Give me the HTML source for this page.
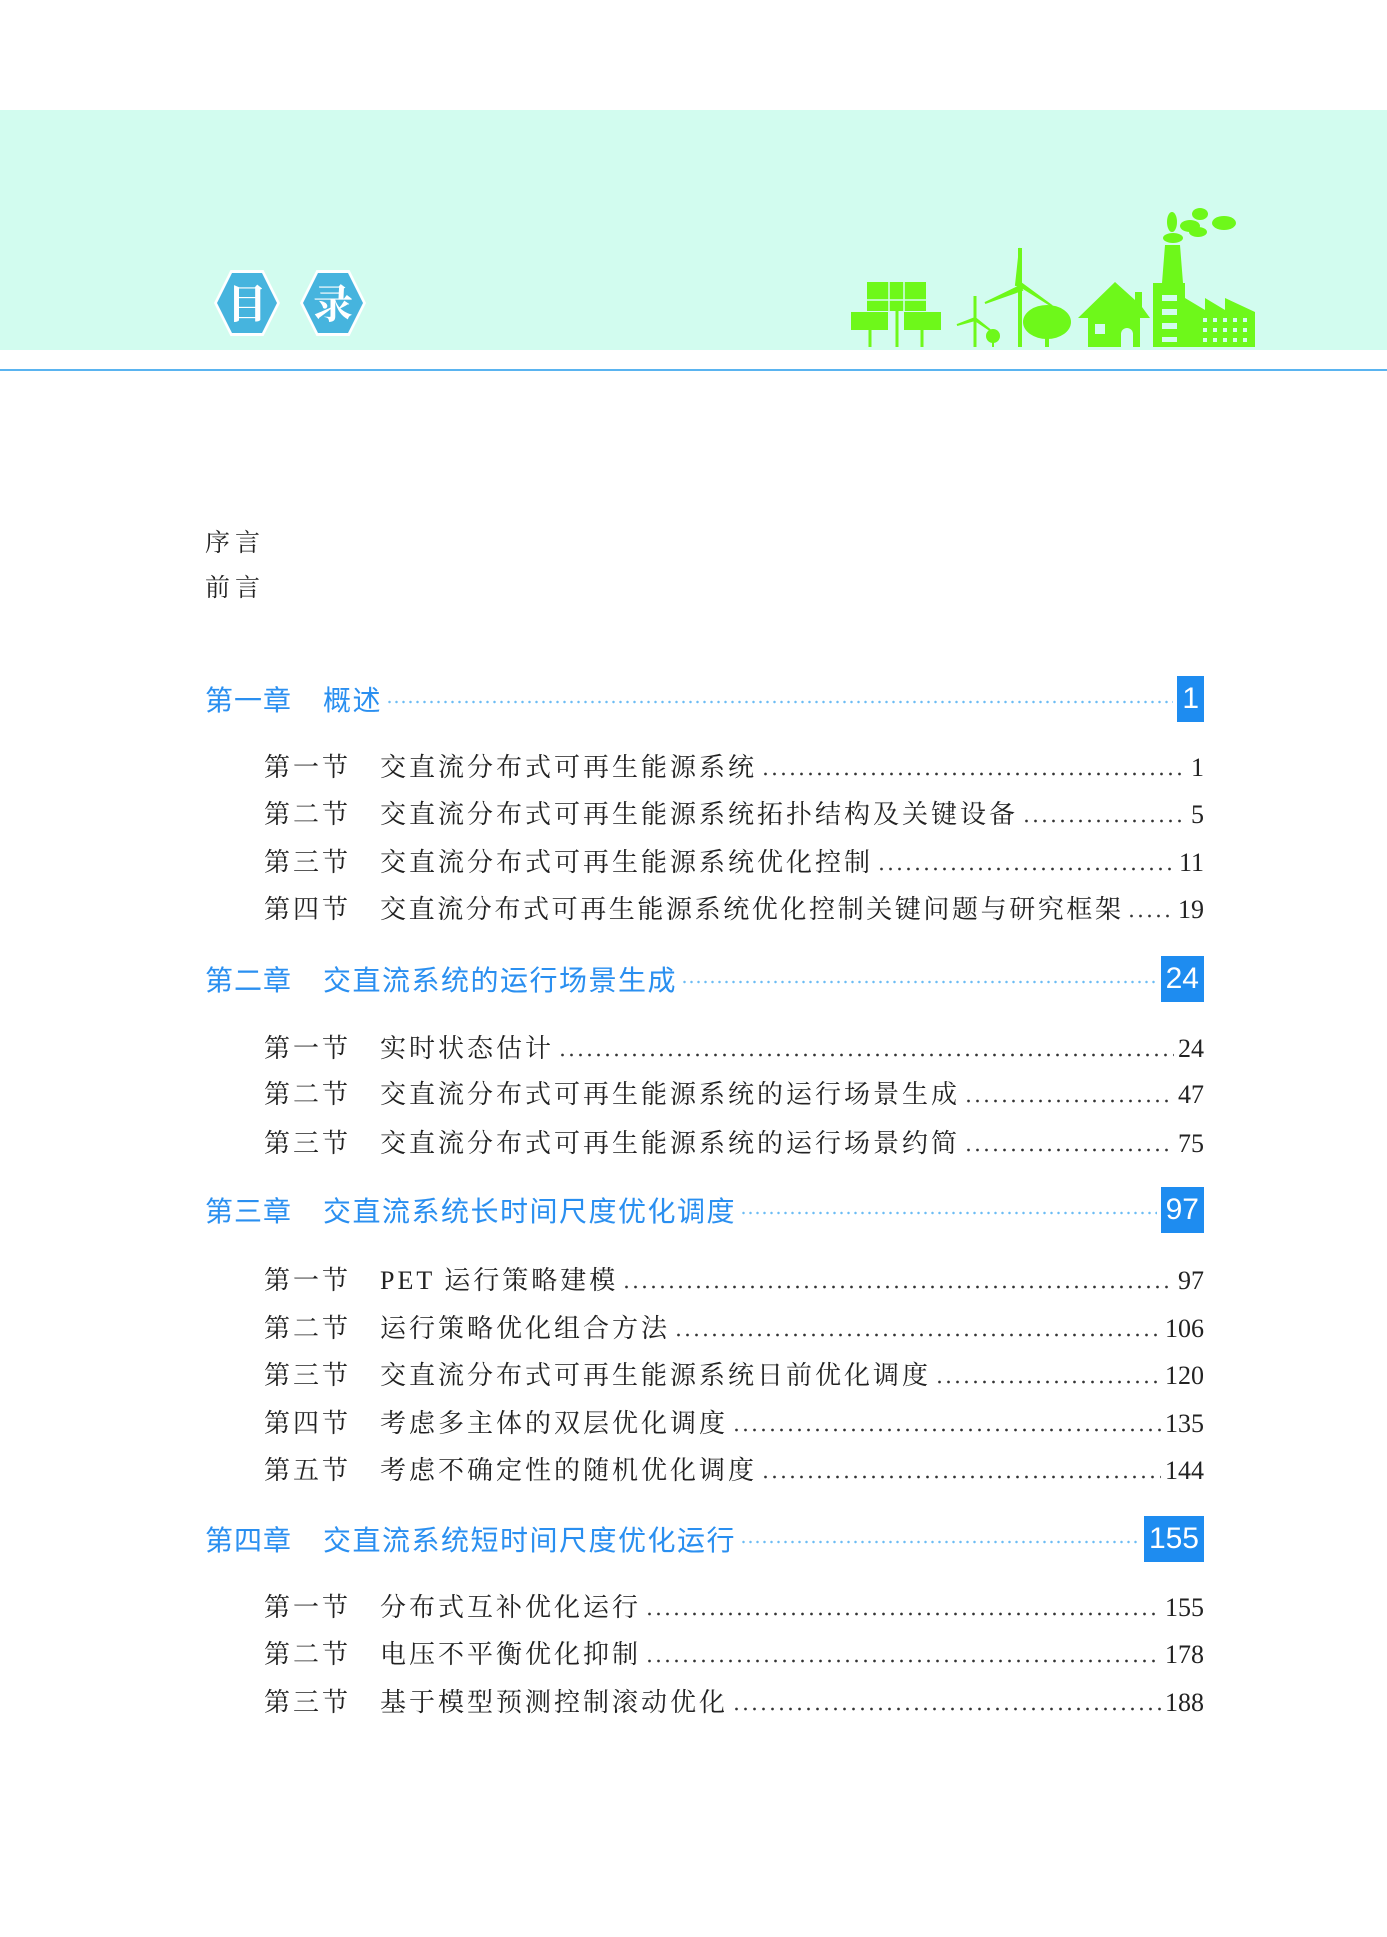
<!DOCTYPE html>
<html><head><meta charset="utf-8"><style>
body{margin:0;width:1387px;height:1937px;background:#fff;position:relative;overflow:hidden;font-family:"Liberation Serif","Noto Serif CJK SC",serif}
.band{position:absolute;left:0;top:110px;width:1387px;height:240px;background:#d2fcef}
.line{position:absolute;left:0;top:369px;width:1387px;height:2px;background:#5ab4f0}
.hex{position:absolute;top:270px;width:66px;height:66px;background:#fff;clip-path:polygon(25% 0,75% 0,100% 50%,75% 100%,25% 100%,0 50%)}
.hex div{position:absolute;left:3px;top:3px;width:60px;height:60px;background:#46b4de;clip-path:polygon(25% 0,75% 0,100% 50%,75% 100%,25% 100%,0 50%);color:#fff;font:bold 40px "Noto Serif CJK SC",serif;text-align:center;line-height:58px}
.pre{position:absolute;left:205px;font-size:25px;color:#222;letter-spacing:5px}
.row{position:absolute;display:flex;align-items:flex-end;right:183px;white-space:nowrap}
.sec{left:264px;font-size:26px;color:#222;height:34px;line-height:34px}
.sec .l{width:116px;letter-spacing:3px}
.sec .t{letter-spacing:3px}
.dots{flex:1;height:4px;margin:0 4px 9px;background-image:radial-gradient(circle,#333 1.1px,transparent 1.6px);background-size:9px 4px;background-repeat:repeat-x}
.ch{left:205px;font-family:"Liberation Sans","Noto Sans CJK SC",sans-serif;color:#2a8ff0;font-size:28px;height:46px;align-items:center}
.ch .l{width:118px;letter-spacing:1px}
.ch .t{letter-spacing:1.5px}
.ch .dots{margin:6px 4px 0;background-image:radial-gradient(circle,#6cbcf4 1px,transparent 1.5px);background-size:7px 4px}
.box{background:#1e8cf0;color:#fff;height:46px;line-height:46px;text-align:center;font-size:30px;padding:0 5px}
</style></head><body>
<div class="band"></div>
<div class="line"></div>
<div class="hex" style="left:214px"><div>目</div></div>
<div class="hex" style="left:300px"><div>录</div></div>
<svg style="position:absolute;left:0;top:0" width="1387" height="360">
<g fill="#6ef81a" stroke="#6ef81a">
<rect x="867" y="282" width="59" height="29" stroke="none"/>
<rect x="851" y="312" width="37" height="18" stroke="none"/>
<rect x="904" y="312" width="37" height="18" stroke="none"/>
<path d="M870 330V347M897 311V347M922 330V347" stroke-width="3" fill="none"/>
<path d="M975 296V347" stroke-width="3"/>
<path d="M975 318L957 325L975 320L990 330Z" stroke-width="2"/>
<path d="M1020 248V347" stroke-width="4"/>
<path d="M1020 248L1016 285L1020 286Z M1020 286L985 303L1022 290Z M1020 286L1052 306L1022 284Z" stroke-width="2"/>
<circle cx="993" cy="336" r="7" stroke="none"/><path d="M993 336V347" stroke-width="2"/>
<ellipse cx="1047" cy="322" rx="24" ry="17" stroke="none"/><path d="M1047 330V347" stroke-width="4"/>
<path d="M1078 318L1115 282L1135 300V292H1142V307L1150 318H1140V347H1088V318Z" stroke="none"/>
<path d="M1165 245H1180L1183 283H1185V298L1205 310V298L1225 310V298L1255 312V347H1153V283H1162Z" stroke="none"/>
<ellipse cx="1172" cy="222" rx="5" ry="10" stroke="none"/>
<ellipse cx="1190" cy="226" rx="10" ry="6" stroke="none"/>
<ellipse cx="1200" cy="214" rx="8" ry="6" stroke="none"/>
<ellipse cx="1224" cy="223" rx="12" ry="7" stroke="none"/>
<ellipse cx="1173" cy="238" rx="10" ry="5" stroke="none"/>
<ellipse cx="1198" cy="232" rx="9" ry="5" stroke="none"/>
</g>
<g fill="#d2fcef">
<path d="M867 300H926M889 282V311M904 282V311" stroke="#d2fcef" stroke-width="1.5"/>
<rect x="1095" y="324" width="10" height="10"/><path d="M1121 347V334a6 6 0 0 1 12 0V347Z"/>
<rect x="1162" y="295" width="15" height="6"/><rect x="1162" y="309" width="15" height="6"/><rect x="1162" y="323" width="15" height="6"/><rect x="1162" y="337" width="15" height="5"/>
<g><rect x="1203" y="318" width="4" height="4"/><rect x="1213" y="318" width="4" height="4"/><rect x="1223" y="318" width="4" height="4"/><rect x="1233" y="318" width="4" height="4"/><rect x="1243" y="318" width="4" height="4"/>
<rect x="1203" y="328" width="4" height="4"/><rect x="1213" y="328" width="4" height="4"/><rect x="1223" y="328" width="4" height="4"/><rect x="1233" y="328" width="4" height="4"/><rect x="1243" y="328" width="4" height="4"/>
<rect x="1203" y="338" width="4" height="4"/><rect x="1213" y="338" width="4" height="4"/><rect x="1223" y="338" width="4" height="4"/><rect x="1233" y="338" width="4" height="4"/><rect x="1243" y="338" width="4" height="4"/></g>
</g>
</svg>

<div class="pre" style="top:523px">序言</div>
<div class="pre" style="top:568px">前言</div>

<div class="row ch" style="top:676px"><span class="l">第一章</span><span class="t">概述</span><span class="dots"></span><span class="box">1</span></div>
<div class="row sec" style="top:751px"><span class="l">第一节</span><span class="t">交直流分布式可再生能源系统</span><span class="dots"></span><span>1</span></div>
<div class="row sec" style="top:798px"><span class="l">第二节</span><span class="t">交直流分布式可再生能源系统拓扑结构及关键设备</span><span class="dots"></span><span>5</span></div>
<div class="row sec" style="top:846px"><span class="l">第三节</span><span class="t">交直流分布式可再生能源系统优化控制</span><span class="dots"></span><span>11</span></div>
<div class="row sec" style="top:893px"><span class="l">第四节</span><span class="t" style="letter-spacing:2.6px">交直流分布式可再生能源系统优化控制关键问题与研究框架</span><span class="dots" style="margin:0 3px 9px"></span><span>19</span></div>

<div class="row ch" style="top:956px"><span class="l">第二章</span><span class="t">交直流系统的运行场景生成</span><span class="dots"></span><span class="box">24</span></div>
<div class="row sec" style="top:1032px"><span class="l">第一节</span><span class="t">实时状态估计</span><span class="dots"></span><span>24</span></div>
<div class="row sec" style="top:1078px"><span class="l">第二节</span><span class="t">交直流分布式可再生能源系统的运行场景生成</span><span class="dots"></span><span>47</span></div>
<div class="row sec" style="top:1127px"><span class="l">第三节</span><span class="t">交直流分布式可再生能源系统的运行场景约简</span><span class="dots"></span><span>75</span></div>

<div class="row ch" style="top:1187px"><span class="l">第三章</span><span class="t">交直流系统长时间尺度优化调度</span><span class="dots"></span><span class="box">97</span></div>
<div class="row sec" style="top:1264px"><span class="l">第一节</span><span class="t">PET 运行策略建模</span><span class="dots"></span><span>97</span></div>
<div class="row sec" style="top:1312px"><span class="l">第二节</span><span class="t">运行策略优化组合方法</span><span class="dots"></span><span>106</span></div>
<div class="row sec" style="top:1359px"><span class="l">第三节</span><span class="t">交直流分布式可再生能源系统日前优化调度</span><span class="dots"></span><span>120</span></div>
<div class="row sec" style="top:1407px"><span class="l">第四节</span><span class="t">考虑多主体的双层优化调度</span><span class="dots"></span><span>135</span></div>
<div class="row sec" style="top:1454px"><span class="l">第五节</span><span class="t">考虑不确定性的随机优化调度</span><span class="dots"></span><span>144</span></div>

<div class="row ch" style="top:1516px"><span class="l">第四章</span><span class="t">交直流系统短时间尺度优化运行</span><span class="dots"></span><span class="box">155</span></div>
<div class="row sec" style="top:1591px"><span class="l">第一节</span><span class="t">分布式互补优化运行</span><span class="dots"></span><span>155</span></div>
<div class="row sec" style="top:1638px"><span class="l">第二节</span><span class="t">电压不平衡优化抑制</span><span class="dots"></span><span>178</span></div>
<div class="row sec" style="top:1686px"><span class="l">第三节</span><span class="t">基于模型预测控制滚动优化</span><span class="dots"></span><span>188</span></div>
</body></html>
